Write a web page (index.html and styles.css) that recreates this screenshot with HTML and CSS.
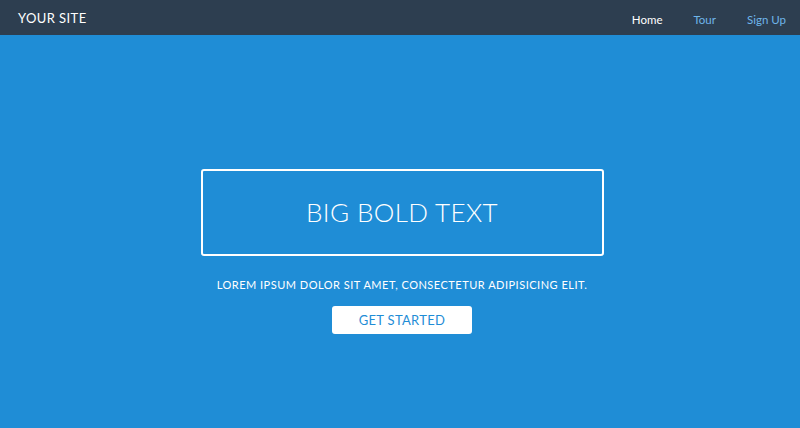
FILE: index.html
```html
<!DOCTYPE html>
<html lang="en">
<head>
    <meta charset="UTF-8">
    <meta name="viewport" content="width=device-width, initial-scale=1.0">
    <title>Your Site</title>
    <link rel="stylesheet" href="styles.css">
</head>
<body>
    <nav class="navbar">
        <a class="brand" href="#">YOUR SITE</a>
        <ul class="nav-links">
            <li><a class="active" href="#">Home</a></li>
            <li><a href="#">Tour</a></li>
            <li><a href="#">Sign Up</a></li>
        </ul>
    </nav>

    <section class="hero">
        <div class="hero-box">
            <h1>BIG BOLD TEXT</h1>
        </div>
        <p class="tagline">LOREM IPSUM DOLOR SIT AMET, CONSECTETUR ADIPISICING ELIT.</p>
        <a class="btn" href="#">GET STARTED</a>
    </section>
</body>
</html>
```

FILE: styles.css
```css
body {
    font-family: Lato, "Open Sans", sans-serif;
    margin: 0;
    padding: 0;
    background-color: #1f8dd6;
    color: white;
    height: 428px;
    display: flex;
    flex-direction: column;
}
a {
    text-decoration: none;
}
.navbar {
    height: 35px;
    flex-shrink: 0;
    background-color: #2d3e50;
    display: flex;
    align-items: center;
    justify-content: space-between;
    padding: 0 14px 0 18px;
}
.brand {
    color: white;
    font-size: 13px;
    letter-spacing: 0.4px;
}
.nav-links {
    list-style: none;
    margin: 0;
    padding: 0;
    display: flex;
    gap: 31px;
}
.nav-links a {
    color: #6fb5ea;
    font-size: 11.5px;
}
.nav-links a.active {
    color: white;
}
.hero {
    flex: 1;
    display: flex;
    flex-direction: column;
    align-items: center;
    justify-content: center;
    padding: 39px 0 0 4px;
}
.hero-box {
    width: 399px;
    height: 83px;
    border: 2px solid white;
    border-radius: 3px;
    display: flex;
    align-items: center;
    justify-content: center;
}
.hero-box h1 {
    margin: 0;
    font-weight: 300;
    font-size: 26px;
    letter-spacing: 0.4px;
}
.tagline {
    margin: 22px 0 15px;
    font-size: 11px;
    letter-spacing: 0.5px;
}
.btn {
    background: white;
    color: #1f8dd6;
    width: 140px;
    height: 28px;
    line-height: 28px;
    text-align: center;
    border-radius: 3px;
    font-size: 13px;
    letter-spacing: 0.3px;
}
```
